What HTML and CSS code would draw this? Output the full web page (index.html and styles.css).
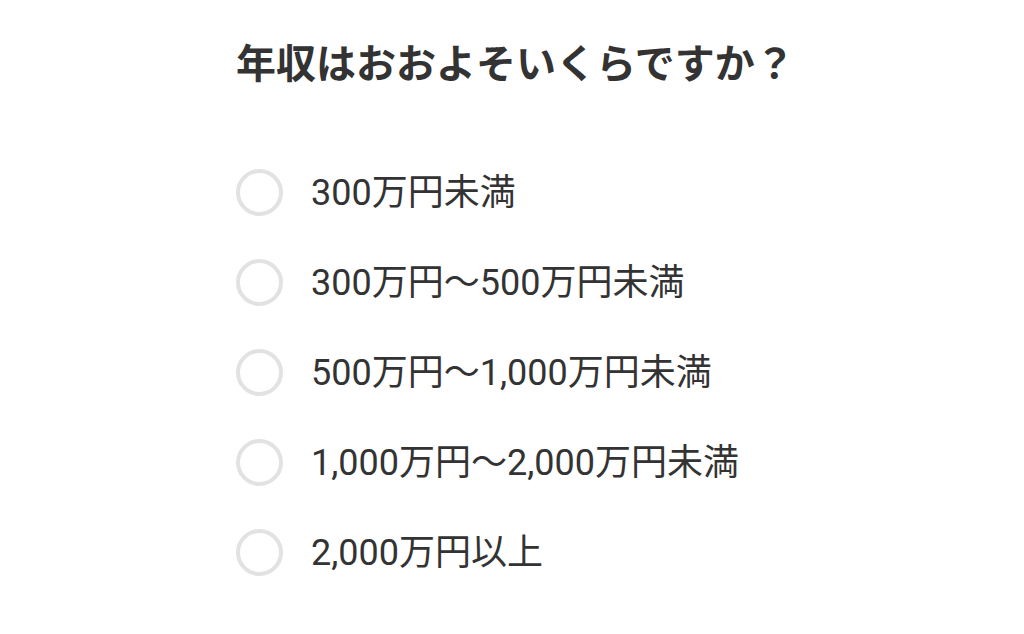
FILE: index.html
```html
<!DOCTYPE html>
<html lang="ja">
<head>
<meta charset="utf-8">
<link rel="stylesheet" href="styles.css">
</head>
<body>
<div class="page">
  <h1 class="title">年収はおおよそいくらですか？</h1>
  <ul class="options">
    <li class="option"><span class="radio"></span><span class="label">300万円未満</span></li>
    <li class="option"><span class="radio"></span><span class="label">300万円～500万円未満</span></li>
    <li class="option"><span class="radio"></span><span class="label">500万円～1,000万円未満</span></li>
    <li class="option"><span class="radio"></span><span class="label">1,000万円～2,000万円未満</span></li>
    <li class="option"><span class="radio"></span><span class="label">2,000万円以上</span></li>
  </ul>
</div>
</body>
</html>
```

FILE: styles.css
```css
html, body {
  margin: 0;
  padding: 0;
  background: #ffffff;
}
body {
  width: 1024px;
  height: 634px;
  overflow: hidden;
  font-family: Roboto, "Noto Sans CJK JP", sans-serif;
  color: #333333;
}
.page {
  display: flex;
  flex-direction: column;
  padding: 37px 0 0 236px;
}
.title {
  margin: 0;
  font-size: 40px;
  line-height: 56px;
  font-weight: 700;
  color: #333333;
  letter-spacing: 0;
}
.options {
  list-style: none;
  margin: 54px 0 0 0;
  padding: 0;
  display: flex;
  flex-direction: column;
}
.option {
  height: 90px;
  display: flex;
  align-items: center;
  gap: 28px;
}
.radio {
  width: 47px;
  height: 47px;
  box-sizing: border-box;
  border: 4px solid #e2e2e2;
  border-radius: 50%;
  flex: none;
}
.label {
  font-size: 36px;
  line-height: 1.2;
  padding-top: 3px;
  color: #333333;
}
```
